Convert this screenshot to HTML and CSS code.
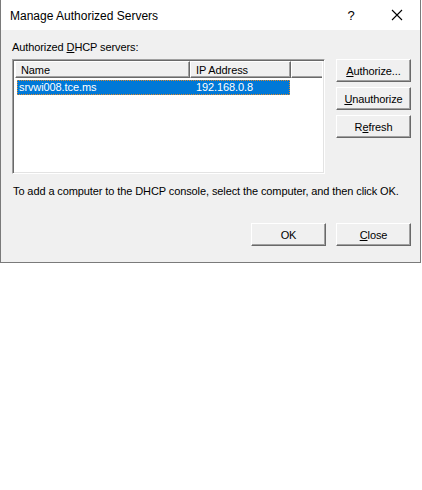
FILE: index.html
```html
<!DOCTYPE html>
<html lang="en">
<head>
    <meta charset="UTF-8">
    <title>Manage Authorized Servers</title>
    <link rel="stylesheet" href="styles.css">
</head>
<body>
    <div class="dialog">
        <div class="titlebar">
            <span class="title">Manage Authorized Servers</span>
            <span class="help">?</span>
            <span class="close-x">
                <svg width="12" height="12" viewBox="0 0 12 12"><path d="M1 1 L11 11 M11 1 L1 11" stroke="#000" stroke-width="1.1" fill="none"/></svg>
            </span>
        </div>

        <div class="content">
            <div class="label">Authorized <u>D</u>HCP servers:</div>

            <div class="main">
                <div class="listbox">
                    <div class="header">
                        <div class="col col-name">Name</div>
                        <div class="col col-ip">IP Address</div>
                        <div class="col col-rest"></div>
                    </div>
                    <div class="row selected">
                        <span class="cell-name">srvwi008.tce.ms</span>
                        <span class="cell-ip">192.168.0.8</span>
                    </div>
                </div>

                <div class="side-buttons">
                    <button class="btn"><u>A</u>uthorize...</button>
                    <button class="btn"><u>U</u>nauthorize</button>
                    <button class="btn">R<u>e</u>fresh</button>
                </div>
            </div>

            <p class="hint">To add a computer to the DHCP console, select the computer, and then click OK.</p>

            <div class="footer-buttons">
                <button class="btn">OK</button>
                <button class="btn"><u>C</u>lose</button>
            </div>
        </div>
    </div>
</body>
</html>
```

FILE: styles.css
```css
body {
    margin: 0;
    background: #ffffff;
    font-family: 'Liberation Sans', Arial, sans-serif;
    font-size: 11px;
    letter-spacing: -0.1px;
    color: #000;
}
.dialog {
    width: 421px;
    height: 263px;
    box-sizing: border-box;
    border: 1px solid #7a7a7a;
    border-top: none;
    background: #f0f0f0;
    display: flex;
    flex-direction: column;
}
.titlebar {
    height: 30px;
    background: #ffffff;
    display: flex;
    align-items: center;
    padding-left: 9px;
    letter-spacing: 0;
}
.title {
    font-size: 12px;
    flex: 1;
    padding-top: 1px;
}
.help {
    font-size: 13px;
    width: 46px;
    text-align: center;
    padding-left: 3px;
}
.close-x {
    width: 46px;
    display: flex;
    justify-content: center;
}
.content {
    flex: 1;
    padding: 11px 9px 0 11px;
    display: flex;
    flex-direction: column;
}
.label {
    height: 13px;
    line-height: 13px;
    margin-bottom: 5px;
}
.main {
    display: flex;
    align-items: flex-start;
}
.listbox {
    width: 314px;
    height: 115px;
    box-sizing: border-box;
    background: #fff;
    border-top: 1px solid #a0a0a0;
    border-left: 1px solid #a0a0a0;
    border-right: 1px solid #fff;
    border-bottom: 1px solid #fff;
    box-shadow: inset 1px 1px 0 #696969, inset -1px -1px 0 #e3e3e3;
    padding: 1px 2px 2px 2px;
}
.header {
    display: flex;
    height: 17px;
}
.col {
    box-sizing: border-box;
    height: 17px;
    line-height: 16px;
    padding-left: 5px;
    background: #f0f0f0;
    border-top: 1px solid #fff;
    border-left: 1px solid #fff;
    border-right: 1px solid #696969;
    border-bottom: 1px solid #696969;
    box-shadow: inset -1px -1px 0 #a0a0a0;
}
.col-name { width: 175px; }
.col-ip { width: 101px; }
.col-rest { flex: 1; border-right: none; box-shadow: inset 0 -1px 0 #a0a0a0; }
.row {
    display: flex;
    height: 15px;
    line-height: 13px;
    margin: 2px 0 0 2px;
    width: 273px;
    box-sizing: border-box;
}
.selected {
    background: #0078d7;
    color: #fff;
    border: 1px dotted #e08a2c;
}
.cell-name {
    width: 176px;
    padding-left: 1px;
}
.cell-ip {
    padding-left: 1px;
}
.side-buttons {
    display: flex;
    flex-direction: column;
    gap: 5px;
    margin-left: 11px;
}
.btn {
    width: 75px;
    height: 23px;
    box-sizing: border-box;
    font-family: 'Liberation Sans', Arial, sans-serif;
    font-size: 11px;
    letter-spacing: -0.1px;
    color: #000;
    background: #f0f0f0;
    border-top: 1px solid #fff;
    border-left: 1px solid #fff;
    border-right: 1px solid #696969;
    border-bottom: 1px solid #696969;
    box-shadow: inset -1px -1px 0 #a0a0a0;
    padding: 0;
}
.hint {
    margin: 11px 0 0 1px;
    line-height: 13px;
}
.footer-buttons {
    display: flex;
    justify-content: flex-end;
    gap: 10px;
    margin-top: 25px;
}
```
